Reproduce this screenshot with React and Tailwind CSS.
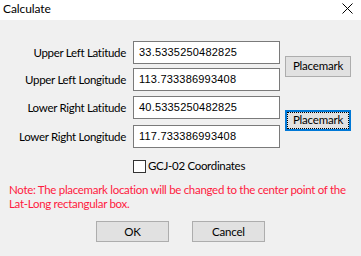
import React from "react";

const LABEL = "w-[126px] shrink-0 text-right text-[11.5px] tracking-[-0.3px] leading-[14px] text-black";
const BOX = "ml-[7px] w-[147px] h-[23px] bg-white border border-[#7a7a7a] flex items-center pl-[5px] text-[11px] tracking-[0.2px] text-black font-['Liberation_Sans',Arial,sans-serif]";

function Row({ label, value, className = "" }) {
  return (
    <div className={"flex items-center " + className}>
      <div className={LABEL}>{label}</div>
      <div className={BOX}>{value}</div>
    </div>
  );
}

function Btn({ children, className = "" }) {
  return (
    <div className={"h-[21px] bg-[#e1e1e1] border border-[#adadad] flex items-center justify-center text-[11.5px] tracking-[-0.2px] text-black " + className}>
      {children}
    </div>
  );
}

export default function App() {
  return (
    <div className="w-[361px] h-[256px] bg-[#f0f0f0] flex flex-col font-['Lato',sans-serif] overflow-hidden">
      <div className="h-[20px] bg-white flex items-start justify-between shrink-0">
        <div className="pl-[3px] pt-[2px] text-[12px] tracking-[-0.1px] leading-[14px] text-black">Calculate</div>
        <svg width="12" height="12" viewBox="0 0 12 12" className="mt-[3px] mr-[7px]">
          <path d="M0.5 0.5 L10.5 10.5 M10.5 0.5 L0.5 10.5" stroke="#000" strokeWidth="1" fill="none" />
        </svg>
      </div>

      <div className="flex flex-col pt-[21px]">
        <div className="flex items-center">
          <div className="flex flex-col">
            <Row label="Upper Left Latitude" value="33.5335250482825" />
            <Row label="Upper Left Longitude" value="113.733386993408" className="mt-[4px]" />
          </div>
          <Btn className="ml-[5px] w-[66px]">Placemark</Btn>
        </div>
        <div className="flex items-center mt-[5px]">
          <div className="flex flex-col">
            <Row label="Lower Right Latitude" value="40.5335250482825" />
            <Row label="Lower Right Longitude" value="117.733386993408" className="mt-[6px]" />
          </div>
          <div className="ml-[5px] w-[66px] h-[21px] -mt-[4px] bg-[#e1e1e1] border-2 border-[#0078d7] p-0 flex">
            <div className="flex-1 border border-dotted border-black flex items-center justify-center text-[11.5px] tracking-[-0.2px] text-black">
              Placemark
            </div>
          </div>
        </div>

        <div className="flex items-center pl-[133px] mt-[11px]">
          <div className="w-[13px] h-[13px] border border-[#333333] bg-white" />
          <span className="ml-[2px] text-[11.5px] tracking-[-0.3px] leading-[14px] text-black">GCJ-02 Coordinates</span>
        </div>

        <div className="px-[9px] mt-[10px] text-[11.5px] tracking-[-0.3px] leading-[13.5px] text-[#ff1a40]">
          Note: The placemark location will be changed to the center point of the Lat-Long rectangular box.
        </div>

        <div className="flex pl-[96px] mt-[11px] gap-[23px]">
          <Btn className="w-[73px]">OK</Btn>
          <Btn className="w-[73px]">Cancel</Btn>
        </div>
      </div>
    </div>
  );
}
